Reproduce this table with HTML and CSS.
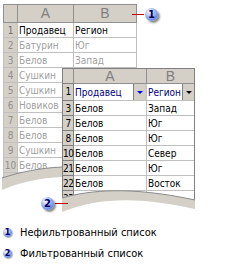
FILE: index.html
```html
<!DOCTYPE html>
<html lang="ru">
<head>
<meta charset="utf-8">
<title>Фильтрованный список</title>
<link rel="stylesheet" href="styles.css">
</head>
<body>
<div class="canvas">
  <div class="sheet back">
    <div class="corner"></div><div class="ch">A</div><div class="ch">B</div>
    <div class="rh first">1</div><div class="c head">Продавец</div><div class="c head">Регион</div>
    <div class="rh">2</div><div class="c">Батурин</div><div class="c">Юг</div>
    <div class="rh">3</div><div class="c">Белов</div><div class="c">Запад</div>
    <div class="rh">4</div><div class="c">Сушкин</div><div class="c"></div>
    <div class="rh">5</div><div class="c">Сушкин</div><div class="c"></div>
    <div class="rh">6</div><div class="c">Новиков</div><div class="c"></div>
    <div class="rh">7</div><div class="c">Белов</div><div class="c"></div>
    <div class="rh">8</div><div class="c">Белов</div><div class="c"></div>
    <div class="rh">9</div><div class="c">Сушкин</div><div class="c"></div>
    <div class="rh">10</div><div class="c">Белов</div><div class="c"></div>
    <div class="rh">11</div><div class="c">Белов</div><div class="c"></div>
  </div>
  <svg class="tear" width="243" height="222" viewBox="0 0 243 222">
    <path d="M2,178 C20,172 40,168 62,167 L62,222 L2,222 Z" fill="#fff"/>
    <path d="M2,178 C20,172 40,168 62,167 L62,177 C40,178 20,182 2,190 Z" fill="#d4d0c8"/>
    <path d="M2,178 C20,172 40,168 62,167" fill="none" stroke="#8a8a8a" stroke-width="1"/>
  </svg>
  <div class="sheet front">
    <div class="corner"></div><div class="ch">A</div><div class="ch">B</div>
    <div class="rh">1</div>
    <div class="c filter"><span class="ftext">Продавец</span><span class="fbtn wide"><span class="tri blue"></span></span></div>
    <div class="c filter"><span class="ftext">Регион</span><span class="fbtn"><span class="tri"></span></span></div>
    <div class="rh">3</div><div class="c">Белов</div><div class="c">Запад</div>
    <div class="rh">7</div><div class="c">Белов</div><div class="c">Юг</div>
    <div class="rh">8</div><div class="c">Белов</div><div class="c">Юг</div>
    <div class="rh">10</div><div class="c">Белов</div><div class="c">Север</div>
    <div class="rh">21</div><div class="c">Белов</div><div class="c">Юг</div>
    <div class="rh">22</div><div class="c">Белов</div><div class="c">Восток</div>
    <div class="rh">23</div><div class="c">Белов</div><div class="c">Юг</div>
  </div>
  <svg class="tear" width="243" height="222" viewBox="0 0 243 222">
    <path d="M62,198 C90,190 130,186 195,200 L195,222 L62,222 Z" fill="#fff"/>
    <path d="M62,198 C90,190 130,186 195,200 L195,209 C140,197 100,197 62,212 Z" fill="#d4d0c8"/>
    <path d="M62,198 C90,190 130,186 195,200" fill="none" stroke="#8a8a8a" stroke-width="1"/>
  </svg>
  <div class="leader l1"></div>
  <span class="badge big b1">1</span>
  <div class="leader l2"></div>
  <span class="badge big b2">2</span>
</div>
<div class="legend">
  <div class="item"><span class="badge small">1</span><span class="label">Нефильтрованный список</span></div>
  <div class="item"><span class="badge small">2</span><span class="label">Фильтрованный список</span></div>
</div>
</body>
</html>
```
FILE: styles.css
```css
html, body {
  margin: 0;
  padding: 0;
  background: #fff;
}
body {
  width: 243px;
  height: 267px;
  overflow: hidden;
  font-family: "DejaVu Sans Condensed", "DejaVu Sans", sans-serif;
}
.canvas {
  position: relative;
  width: 243px;
  height: 222px;
}
.sheet {
  position: absolute;
  display: grid;
  gap: 1px;
  background: #c0c0c0;
  font-size: 10px;
}
.back {
  left: 3px;
  top: 4px;
  padding: 1px;
  grid-template-columns: 13px 55px 62px;
  grid-template-rows: 17px repeat(11, 14px);
  color: #a0a0a0;
}
.front {
  left: 62px;
  top: 68px;
  border: 1px solid #808080;
  grid-template-columns: 10px 72px 47px;
  grid-template-rows: 14px 16px repeat(7, 14px);
  color: #000;
  height: 136px;
  overflow: hidden;
}
.corner, .ch, .rh {
  background: #d4d0c8;
}
.ch {
  color: #808080;
  font-family: "Liberation Sans", Arial, sans-serif;
  font-size: 14px;
  line-height: 17px;
  text-align: center;
  box-shadow: 0 0 0 1px #909090;
}
.front .ch {
  line-height: 14px;
  font-size: 14px;
}
.corner {
  box-shadow: 0 0 0 1px #909090;
}
.rh {
  color: #909090;
  text-align: center;
  line-height: 15px;
  font-size: 10px;
}
.back .rh.first {
  color: #707070;
}
.front .rh {
  color: #000;
  box-shadow: 0 0 0 1px #808080;
  letter-spacing: -0.5px;
}
.c {
  background: #fff;
  padding-left: 1px;
  line-height: 15px;
  white-space: nowrap;
  overflow: hidden;
}
.back .c.head {
  color: #000;
}
.filter {
  display: flex;
  justify-content: space-between;
  align-items: stretch;
  padding-right: 0;
  color: #000080;
  line-height: 17px;
}
.fbtn {
  width: 11px;
  background: #d4d0c8;
  border-left: 1px solid #808080;
  display: flex;
  align-items: center;
  justify-content: center;
}
.fbtn.wide {
  width: 12px;
}
.tri {
  width: 0;
  height: 0;
  border-left: 3px solid transparent;
  border-right: 3px solid transparent;
  border-top: 3px solid #000;
}
.tri.blue {
  border-top-color: #0000ff;
}
.tear {
  position: absolute;
  left: 0;
  top: 0;
}
.leader {
  position: absolute;
  height: 1px;
  background: #c00000;
}
.l1 {
  left: 132px;
  top: 14px;
  width: 12px;
}
.l2 {
  left: 55px;
  top: 203px;
  width: 13px;
}
.badge {
  display: inline-flex;
  align-items: center;
  justify-content: center;
  border-radius: 50%;
  background: radial-gradient(circle at 35% 30%, #ffffff 0, #c8d6ff 22%, #7c9ae8 60%, #3f5ec4 100%);
  color: #00005a;
  font-family: "DejaVu Sans", sans-serif;
  font-weight: bold;
}
.big {
  position: absolute;
  width: 13px;
  height: 13px;
  font-size: 10px;
  box-shadow: 2px 2px 2px rgba(0, 0, 0, 0.45);
}
.b1 {
  left: 145px;
  top: 8px;
}
.b2 {
  left: 41px;
  top: 197px;
}
.legend {
  display: flex;
  flex-direction: column;
}
.item {
  display: flex;
  align-items: center;
  height: 21px;
  padding-left: 3px;
  gap: 8px;
}
.small {
  width: 9px;
  height: 9px;
  font-size: 8px;
  box-shadow: 1px 1px 1px rgba(0, 0, 0, 0.3);
}
.label {
  font-size: 11px;
  color: #000;
}
```
